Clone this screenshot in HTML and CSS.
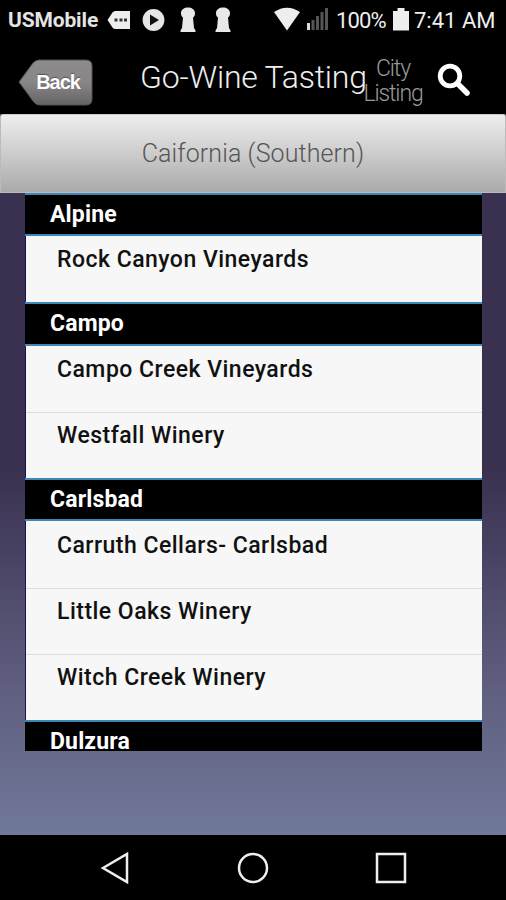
FILE: index.html
```html
<!DOCTYPE html>
<html lang="en">
<head>
<meta charset="utf-8">
<title>Go-Wine Tasting</title>
<link rel="stylesheet" href="styles.css">
</head>
<body>
<div class="screen">
  <div class="status">
    <span class="carrier">USMobile</span>
    <svg class="notices" width="130" height="40" viewBox="0 0 130 40">
      <path fill="#eee" d="M0.500 20 5.500 12.500Q6.500 11 8.500 11H23V29H8.500Q6.500 29 5.500 27.500Z"/>
      <path fill="#333" d="M7.500 18.500h3v3h-3zM12.500 18.500h3v3h-3zM17 18.500h3v3h-3z"/>
      <circle cx="46.500" cy="20" r="10.900" fill="#e6e6e6"/>
      <path fill="#111" d="M43 14.500 52 20 43 25.500Z"/>
      <path id="keyhole" fill="#e8e8e8" d="M74 13C74 5.500 88 5.500 88 13 88 15.500 87.500 16.500 86 17.500L87 28 88.500 30.500V32H73.500V30.500L75 28 76 17.500C74.500 16.500 74 15.500 74 13Z"/>
      <use href="#keyhole" x="35"/>
    </svg>
    <svg class="signals" width="54" height="40" viewBox="0 0 54 40">
      <path fill="#eee" d="M0 12Q13 3.500 26 12L13 30.500Z"/>
      <path fill="#ddd" d="M33 23h3v7h-3z"/>
      <path fill="#555" d="M37.500 20h3v10h-3zM42 16h3v14h-3zM46.500 12h3v18h-3zM51 8h3v22h-3z"/>
    </svg>
    <span class="percent">100%</span>
    <svg class="battery" width="16" height="40" viewBox="0 0 16 40"><path fill="#eee" d="M4.500 8h7v3H16V30.500H0V11H4.500Z"/></svg>
    <span class="clock">7:41 AM</span>
  </div>

  <header class="bar">
    <a class="back">
      <svg width="76" height="50" viewBox="0 0 76 50">
        <defs><linearGradient id="metal" x2="0" y2="1"><stop stop-color="#8d8b8c"/><stop offset=".5" stop-color="#888687"/><stop offset="1" stop-color="#646263"/></linearGradient></defs>
        <path fill="url(#metal)" stroke="#555" d="M1 24 15 5Q18 2 21 2H68Q74 2 74 8V41Q74 47 68 47H21Q18 47 15 43Z"/>
      </svg>
      <span class="back-label">Back</span>
    </a>
    <h1 class="title">Go-Wine Tasting</h1>
    <div class="city">City<br>Listing</div>
    <svg class="search" width="36" height="36" viewBox="0 0 36 36"><g fill="none" stroke="#fff" stroke-linecap="round"><circle cx="13" cy="13" r="9.800" stroke-width="4.800"/><path stroke-width="5.500" d="M21 21 30 30"/></g></svg>
  </header>

  <div class="region">Caifornia (Southern)</div>

  <main class="list">
    <h2 class="group">Alpine</h2>
    <div class="items"><div class="item">Rock Canyon Vineyards</div></div>
    <h2 class="group">Campo</h2>
    <div class="items"><div class="item">Campo Creek Vineyards</div><div class="item">Westfall Winery</div></div>
    <h2 class="group">Carlsbad</h2>
    <div class="items"><div class="item">Carruth Cellars- Carlsbad</div><div class="item">Little Oaks Winery</div><div class="item">Witch Creek Winery</div></div>
    <h2 class="group last">Dulzura</h2>
  </main>

  <nav class="nav">
    <svg width="30" height="34" viewBox="0 0 30 34"><path d="M3 17 27 3V31Z"/></svg>
    <svg width="34" height="34" viewBox="0 0 34 34"><circle cx="17" cy="17" r="14"/></svg>
    <svg width="34" height="34" viewBox="0 0 34 34"><path d="M3 3H31V31H3Z"/></svg>
  </nav>
</div>
</body>
</html>
```
FILE: styles.css
```css
* { box-sizing: border-box; }
body { margin: 0; background: #000; font-family: Roboto, "Liberation Sans", sans-serif; }
svg { display: block; flex: none; }
.screen {
  width: 506px; height: 900px; overflow: hidden;
  display: flex; flex-direction: column;
  background: linear-gradient(#3a3150 0, #3a3150 470px, #605f80 690px, #707899 835px);
}
.status {
  height: 40px; flex: none; background: #000; color: #eee;
  display: flex; align-items: center; padding-left: 8px; white-space: nowrap;
}
.carrier { width: 99px; font-size: 21px; font-weight: 700; letter-spacing: -0.15px; color: #e4e4e4; }
.notices { margin-right: 37px; }
.percent { width: 57px; margin-left: 8px; flex: none; font-size: 22px; letter-spacing: -0.900px; }
.battery { margin-right: 5px; }
.clock { font-size: 22px; }
.bar { height: 74px; flex: none; background: #000; display: flex; align-items: flex-start; padding: 18px 0 0 18px; }
.back { display: grid; width: 76px; flex: none; }
.back > * { grid-area: 1 / 1; }
.back-label { color: #fff; font: 700 20px/48px "Liberation Sans", sans-serif; letter-spacing: -1.100px; text-align: center; padding-left: 4px; text-shadow: 0 -1px 1px #555; }
.title { width: 226px; margin: 0 0 0 46px; color: #eee; font-size: 32px; font-weight: 300; letter-spacing: -0.200px; line-height: 38px; white-space: nowrap; flex: none; }
.city { width: 60px; margin-left: -3px; margin-top: -2px; flex: none; text-align: center; color: #999; font-size: 23px; font-weight: 300; letter-spacing: -1.100px; line-height: 25px; }
.search { margin: 5px 0 0 14px; }
.region {
  height: 79px; flex: none; text-align: center; color: #555;
  font-size: 25px; font-weight: 300; letter-spacing: 0.100px; line-height: 78px;
  background: linear-gradient(#eee, #aaa); border: 1px solid #bbb; border-top-color: #ccc;
  border-radius: 3px 3px 0 0;
}
.list { width: 457px; height: 558px; margin-left: 25px; flex: none; overflow: hidden; }
.group {
  height: 43.200px; margin: 0; padding-left: 25px; background: #000; color: #fff;
  border: solid #3c87ba; border-width: 2px 0; font-size: 23px; font-weight: 700; letter-spacing: 0.150px; line-height: 39px;
}
.last { height: 31px; border-bottom: 0; }
.items { background: #f7f7f7; border: solid #19145a; border-width: 0 0 0 1px; }
.item { height: 66.300px; padding: 9.300px 0 0 31px; font-size: 23px; font-weight: 500; letter-spacing: 0.480px; line-height: 30px; color: #111; }
.item + .item { padding-top: 8.200px; border-top: 1px solid #ddd; }
.nav { height: 65px; margin-top: 84px; flex: none; background: #000; display: flex; align-items: center; padding-left: 100px; }
.nav svg { fill: none; stroke: #eee; stroke-width: 2.500px; }
.nav svg + svg { margin-left: 106px; }
.nav svg + svg + svg { margin-left: 104px; }
```
